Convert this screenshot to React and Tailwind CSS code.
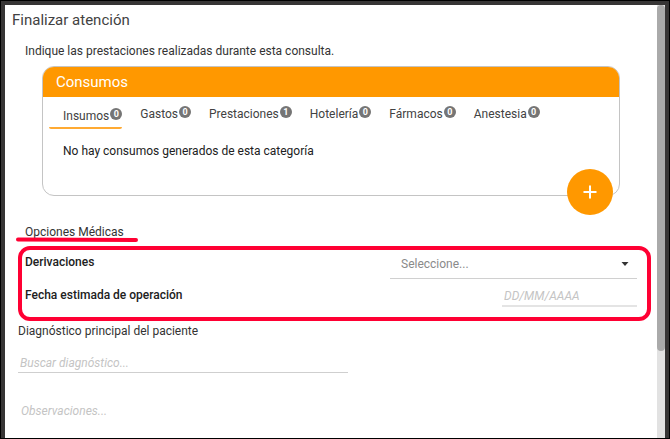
import { useState } from "react";

const TABS = [
  { name: "Insumos", count: 0 },
  { name: "Gastos", count: 0 },
  { name: "Prestaciones", count: 1 },
  { name: "Hotelería", count: 0 },
  { name: "Fármacos", count: 0 },
  { name: "Anestesia", count: 0 },
];

function Tab({ name, count, active, onClick }) {
  return (
    <button
      type="button"
      role="tab"
      aria-selected={active}
      onClick={onClick}
      className={
        active
          ? "flex h-[25px] mt-0.5 pl-3.5 border-b-2 rounded-xs border-[#ffaa33] text-[#424242]"
          : "flex h-6 pl-[18px] text-[#424242]"
      }
    >
      <span className="leading-6">{name}</span>
      <span className="flex items-center justify-center w-3 h-3 mt-1 ml-px rounded-full bg-[#757575] text-white text-[9px] font-bold leading-3">
        {count}
      </span>
    </button>
  );
}

function ConsumosCard() {
  const [selected, setSelected] = useState("Insumos");

  return (
    <section className="relative mt-[5px] ml-[37px] mr-[37px] h-[130px] rounded-xl border border-[#c4c4c4]">
      <h2 className="h-[30px] pl-[13px] rounded-t-[11px] bg-[#ff9800] text-white text-[15px] leading-[30px]">
        Consumos
      </h2>
      <div role="tablist" className="flex items-start h-9 pl-1.5 pt-[5px]">
        {TABS.map((tab) => (
          <Tab
            key={tab.name}
            name={tab.name}
            count={tab.count}
            active={tab.name === selected}
            onClick={() => setSelected(tab.name)}
          />
        ))}
      </div>
      <p className="pl-5 pt-2 leading-5 text-[#212121]">No hay consumos generados de esta categoría</p>

      {/* botón flotante sobre el borde de la tarjeta */}
      <button
        type="button"
        aria-label="Agregar consumo"
        className="absolute right-1.5 -bottom-5 flex items-center justify-center w-[46px] h-[46px] rounded-full bg-[#ff9800]"
      >
        <svg width="14" height="14" viewBox="0 0 14 14" stroke="#fff" strokeWidth="2">
          <path d="M7 0.5v13M0.5 7h13" />
        </svg>
      </button>
    </section>
  );
}

export default function App() {
  return (
    <div className="min-h-screen flex border border-black bg-[#373535] px-1 pt-1 font-[Roboto,sans-serif] text-xs text-[#333333]">
      <main className="flex-1 bg-white">
        <h1 className="pl-[7px] pt-[3px] text-[15px] leading-6 text-[#424242]">Finalizar atención</h1>
        <p className="pl-5 pt-[9px] leading-5">Indique las prestaciones realizadas durante esta consulta.</p>

        <ConsumosCard />

        <div className="relative mt-[26px] pl-5">
          <h2 className="leading-5">Opciones Médicas</h2>
          <svg className="absolute left-[11px] top-3.5" width="122" height="8" viewBox="0 0 122 8" fill="none">
            <path d="M2 3.5L120 4" stroke="#ff0033" strokeWidth="4" strokeLinecap="round" />
          </svg>
        </div>

        <div className="mt-1 ml-[13px] mr-1.5 h-[75px] pl-[3px] pr-2.5 rounded-xl border-4 border-[#ff0033]">
          <div className="flex justify-between font-medium">
            <label htmlFor="derivaciones" className="pt-0.5 leading-5 text-[#212121]">Derivaciones</label>
            <div className="relative w-[247px]">
              <select
                id="derivaciones"
                className="w-full h-[29px] pl-[11px] appearance-none border-b border-[#d0d0d0] font-normal text-[#8a8a8a] outline-none"
              >
                <option>Seleccione...</option>
              </select>
              <svg className="absolute right-2 top-3 pointer-events-none" width="8" height="4" viewBox="0 0 8 4">
                <path d="M0.5 0h7L4 4z" fill="#333" />
              </svg>
            </div>
          </div>
          <div className="flex justify-between font-medium">
            <label htmlFor="fecha" className="pt-1.5 leading-5 text-[#212121]">Fecha estimada de operación</label>
            <input
              id="fecha"
              type="text"
              placeholder="DD/MM/AAAA"
              className="w-[135px] h-7 pl-0.5 pt-2 border-b-2 border-[#e4e4e4] font-normal italic placeholder:text-[#c4c4c4] outline-none"
            />
          </div>
        </div>

        <div className="pl-[13px]">
          <label htmlFor="diagnostico" className="block leading-5">Diagnóstico principal del paciente</label>
          <input
            id="diagnostico"
            type="text"
            placeholder="Buscar diagnóstico..."
            className="block w-[330px] h-5 mt-3 pl-0.5 border-b border-[#cfcfcf] italic placeholder:text-[#c4c4c4] outline-none"
          />
          <textarea
            aria-label="Observaciones"
            rows="1"
            placeholder="Observaciones..."
            className="block w-[330px] h-5 mt-7 pl-[3px] leading-5 resize-none italic placeholder:text-[#c4c4c4] outline-none"
          />
        </div>
      </main>

      {/* barra de desplazamiento */}
      <div className="w-2 bg-[#e2e2e2]" aria-hidden="true">
        <div className="h-4/5 rounded-full bg-[#aaaaaa]" />
      </div>
    </div>
  );
}
